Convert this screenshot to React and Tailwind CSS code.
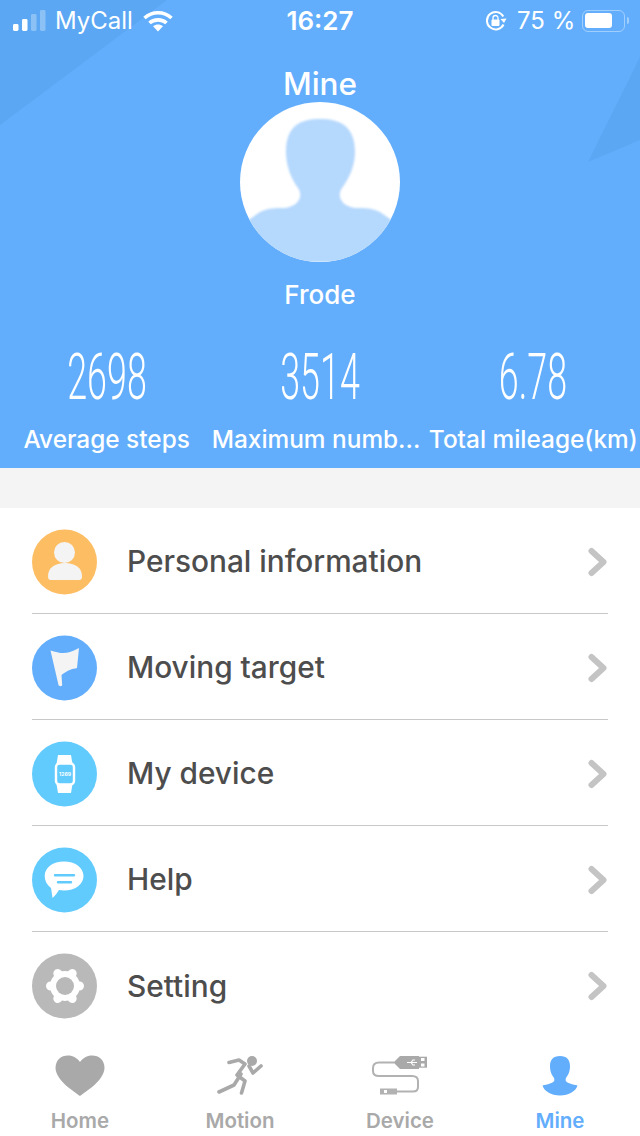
import React from "react";

function Chevron() {
  return (
    <svg width="20" height="30" viewBox="0 0 20 30" className="shrink-0">
      <path d="M3.5 4 L15.5 15 L3.5 26" fill="none" stroke="#c4c4c4" strokeWidth="6" strokeLinecap="round" strokeLinejoin="round" />
    </svg>
  );
}

function Round({ color, children }) {
  return (
    <svg width="65" height="66" viewBox="0 0 65 66" className="shrink-0">
      <circle cx="32.5" cy="33" r="32.5" fill={color} />
      {children}
    </svg>
  );
}

const icons = {
  person: (
    <Round color="#fdbd63">
      <circle cx="32.5" cy="23.5" r="10.5" fill="#f4f4f4" />
      <path d="M16 47 C16 39 23 34 33 34 C43 34 50 39 50 47 C50 50 49 51 47 51 H19 C17 51 16 50 16 47Z" fill="#f4f4f4" />
    </Round>
  ),
  flag: (
    <Round color="#62aefc">
      <path d="M18.5 15.5 C26 18 32 19 38 17 C41 16 44 14.5 47 13 L45 33 C40 34 36 35 29.5 40 L30.2 50 C30.2 51.5 26.8 51.5 26.5 50 Z" fill="#f4f4f4" strokeLinejoin="round" />
    </Round>
  ),
  watch: (
    <Round color="#62cbfe">
      <path d="M26 14 H39 L40.5 23 H24.5 Z M24.5 43 H40.5 L39 52 H26 Z" fill="#fff" />
      <rect x="24" y="22.5" width="18" height="21" rx="3.5" fill="#62cbfe" stroke="#fff" strokeWidth="2.4" />
      <text x="33" y="35" textAnchor="middle" fontSize="5" fontWeight="700" fill="#fff" fontFamily="Inter, sans-serif">1269</text>
    </Round>
  ),
  help: (
    <Round color="#62cbfe">
      <path d="M32 14.5 C43 14.5 51.5 20.5 51.5 29 C51.5 37.5 43 43.5 32 43.5 C30 43.5 28.5 43.3 27 43 C25 46 23 49 20.5 51 C20 47 19.5 44 19 41 C15 38 12.7 34 12.7 29 C12.7 20.5 21 14.5 32 14.5Z" fill="#fff" />
      <path d="M23 28.3 H42 M26 35.3 H39" stroke="#62cbfe" strokeWidth="2.4" strokeLinecap="round" />
    </Round>
  ),
  gear: (
    <Round color="#b9b9b9">
      <g stroke="#fff" strokeWidth="9" strokeLinecap="round">
        <path d="M33 33 L47.5 33 M33 33 L40.2 20.5 M33 33 L25.8 20.5 M33 33 L18.5 33 M33 33 L25.8 45.5 M33 33 L40.2 45.5" />
      </g>
      <circle cx="33" cy="33" r="15" fill="#fff" />
      <circle cx="33" cy="33" r="9" fill="#b9b9b9" />
    </Round>
  ),
};

const rows = [
  ["person", "Personal information"],
  ["flag", "Moving target"],
  ["watch", "My device"],
  ["help", "Help"],
  ["gear", "Setting"],
];

function Row({ icon, label, last }) {
  return (
    <div className={`flex h-[106px] items-center gap-[30px] pt-[2px] ${last ? "" : "border-b border-[#c8c8c8]"}`}>
      {icons[icon]}
      <span className="flex-1 text-[29.8px] font-medium text-[#4d4d4d]">{label}</span>
      <Chevron />
    </div>
  );
}

function Stat({ value, label, labelCls }) {
  return (
    <div className="flex flex-col items-center">
      <div className="h-[64px] origin-center scale-x-[0.56] font-['Roboto'] text-[64px] leading-[64px] font-light whitespace-nowrap text-white">{value}</div>
      <div className={`mt-[13px] text-[24.4px] leading-[32px] font-medium whitespace-nowrap text-white ${labelCls}`}>{label}</div>
    </div>
  );
}

function StatusBar() {
  return (
    <div className="relative flex h-[40px] items-center pt-[1px] text-white">
      <div className="flex w-[320px] items-center pl-[13px]">
        <svg width="34" height="22" viewBox="0 0 34 22" className="shrink-0">
          <rect x="0" y="14" width="5.5" height="7" rx="1.4" fill="#fff" />
          <rect x="9" y="9" width="5.5" height="12" rx="1.4" fill="#fff" />
          <rect x="18" y="4" width="5.5" height="17" rx="1.4" fill="#fff" fillOpacity="0.3" />
          <rect x="27" y="0" width="5.5" height="21" rx="1.4" fill="#fff" fillOpacity="0.3" />
        </svg>
        <span className="ml-[8px] text-[24px] leading-[40px]">MyCall</span>
        <svg width="30" height="22" viewBox="0 0 30 22" className="ml-[10px] shrink-0">
          <path d="M1.5 8 C9 1 21 1 28.5 8" fill="none" stroke="#fff" strokeWidth="3.6" />
          <path d="M6.5 13 C11 8.8 19 8.8 23.5 13" fill="none" stroke="#fff" strokeWidth="3.6" />
          <path d="M15 21.5 L10 16.3 C13 14 17 14 20 16.3 Z" fill="#fff" />
        </svg>
      </div>
      <span className="absolute left-0 w-[640px] text-center text-[26px] leading-[40px] font-semibold">16:27</span>
      <div className="ml-[165px] flex items-center">
        <svg width="22" height="22" viewBox="0 0 22 22" className="shrink-0">
          <path d="M18.5 14.5 A8.7 8.7 0 1 1 18.3 6.5" fill="none" stroke="#fff" strokeWidth="2" />
          <path d="M21.5 8.5 L15.5 9 L19 13 Z" fill="#fff" />
          <rect x="6.5" y="9.5" width="8" height="6.5" rx="1" fill="#fff" />
          <path d="M8 10 V8 A2.5 2.5 0 0 1 13 8 V10" fill="none" stroke="#fff" strokeWidth="1.3" />
        </svg>
        <span className="ml-[10px] text-[24px] leading-[40px]">75 %</span>
        <div className="ml-[7px] flex items-center">
          <div className="flex h-[22px] w-[43px] items-center rounded-[6px] border-[1.5px] border-white/40 p-[2px]">
            <div className="h-[15px] w-[27px] rounded-[3px] bg-white" />
          </div>
          <div className="ml-[2px] h-[7px] w-[2px] rounded-r-sm bg-white/40" />
        </div>
      </div>
    </div>
  );
}

function Avatar() {
  return (
    <svg width="160" height="160" viewBox="0 0 160 160">
      <defs>
        <clipPath id="avatarClip">
          <circle cx="80" cy="80" r="80" />
        </clipPath>
      </defs>
      <circle cx="80" cy="80" r="80" fill="#fff" />
      <g clipPath="url(#avatarClip)">
        <path
          d="M80 17 C60 17 46 24 46 50 C46 65 52 78 58 86 C63 93 60 104 45 106 C35 106 28 106 20 110 L0 124 V160 H160 V124 L140 110 C132 106 125 106 115 106 C100 104 97 93 102 86 C108 78 115 65 115 50 C115 24 100 17 80 17Z"
          fill="#b5d8fd"
          className="blur-[0.8px]"
        />
      </g>
    </svg>
  );
}

function Header() {
  return (
    <div className="relative h-[468px] overflow-hidden bg-[#62aefc]">
      <svg width="640" height="170" viewBox="0 0 640 170" className="absolute top-0 left-0">
        <path d="M0 0 H167 L0 125 Z" fill="#5ba7f3" />
        <path d="M588 162 L640 57 V140 Z" fill="#5ba7f3" />
      </svg>
      <div className="relative flex flex-col">
        <StatusBar />
        <div className="mt-[24px] h-[38px] text-center text-[31.5px] leading-[40px] font-medium text-white">Mine</div>
        <div className="flex justify-center">
          <Avatar />
        </div>
        <div className="mt-[17px] text-center text-[26px] leading-[32px] font-medium text-white">Frode</div>
        <div className="mt-[35px] grid grid-cols-3">
          <Stat value="2698" label="Average steps" />
          <Stat value="3514" label="Maximum numb..." labelCls="pr-[8px]" />
          <Stat value="6.78" label="Total mileage(km)" />
        </div>
      </div>
    </div>
  );
}

const tabs = [
  {
    label: "Home",
    icon: (
      <svg width="50" height="42" viewBox="0 0 50 42">
        <path d="M25 41 C20 37 1 26 0.5 13 C0.5 5 6 0.5 13 0.5 C18 0.5 22 3 25 7 C28 3 32 0.5 37 0.5 C44 0.5 49.5 5 49.5 13 C49 26 30 37 25 41Z" fill="#a9a9a9" />
      </svg>
    ),
  },
  {
    label: "Motion",
    icon: (
      <svg width="46" height="42" viewBox="0 0 46 42">
        <circle cx="35" cy="6" r="5" fill="#a9a9a9" />
        <path d="M12 7.5 L22 5 L28 9 L20 20 L28 26 L24.5 38 M24 19 L17 30 L2 37 M32 11 L36 18 L44 11" fill="none" stroke="#a9a9a9" strokeWidth="3.6" strokeLinecap="round" strokeLinejoin="round" />
      </svg>
    ),
  },
  {
    label: "Device",
    icon: (
      <svg width="56" height="42" viewBox="0 0 56 42">
        <path d="M22 7.5 H7 Q1 7.5 1 13 V16 Q1 21 7 21 H40 Q46 21 46 26 V32 Q46 36.5 41 36.5 H25" fill="none" stroke="#b2b2b2" strokeWidth="2" />
        <path d="M21.5 7.5 L28 1 H47 V14 H28 Z" fill="#a9a9a9" />
        <rect x="47" y="1.7" width="8" height="11" fill="#a9a9a9" />
        <rect x="49" y="3" width="3.5" height="3" fill="#fff" />
        <rect x="49" y="8.5" width="3.5" height="3" fill="#fff" />
        <path d="M35 7.5 H45 M39 7.5 L41 5 H43 M39 7.5 L41 10 H43" stroke="#fff" strokeWidth="1.2" fill="none" />
        <rect x="8" y="33.5" width="17" height="6" fill="#b2b2b2" />
        <rect x="12" y="35" width="3" height="3" fill="#fff" />
      </svg>
    ),
  },
  {
    label: "Mine",
    icon: (
      <svg width="36" height="42" viewBox="0 0 36 42">
        <path d="M18 1 C11 1 8 5 8 11 C8 17 10 20 12 23 C13 26 12 27 8 28.5 C5 29.5 3 30 0.5 30.5 C2 36 9 40.5 18 40.5 C27 40.5 34 36 35.5 30.5 C33 30 31 29.5 28 28.5 C24 27 23 26 24 23 C26 20 28 17 28 11 C28 5 25 1 18 1Z" fill="#62aefc" />
      </svg>
    ),
  },
];

function TabBar() {
  return (
    <div className="grid h-[98px] grid-cols-4 bg-white">
      {tabs.map((t) => (
        <div key={t.label} className="flex flex-col items-center pt-[16px]">
          <div className="flex h-[44px] items-center justify-center">{t.icon}</div>
          <span className={`mt-[10px] text-[20.5px] leading-[26px] font-semibold ${t.label === "Mine" ? "text-[#62aefc]" : "text-[#a9a9a9]"}`}>{t.label}</span>
        </div>
      ))}
    </div>
  );
}

export default function App() {
  return (
    <div className="flex h-[1136px] w-[640px] flex-col overflow-hidden bg-white font-['Inter',sans-serif]">
      <Header />
      <div className="h-[40px] bg-[#f4f4f4]" />
      <div className="px-8">
        {rows.map(([icon, label], i) => (
          <Row key={label} icon={icon} label={label} last={i === rows.length - 1} />
        ))}
      </div>
      <TabBar />
    </div>
  );
}
